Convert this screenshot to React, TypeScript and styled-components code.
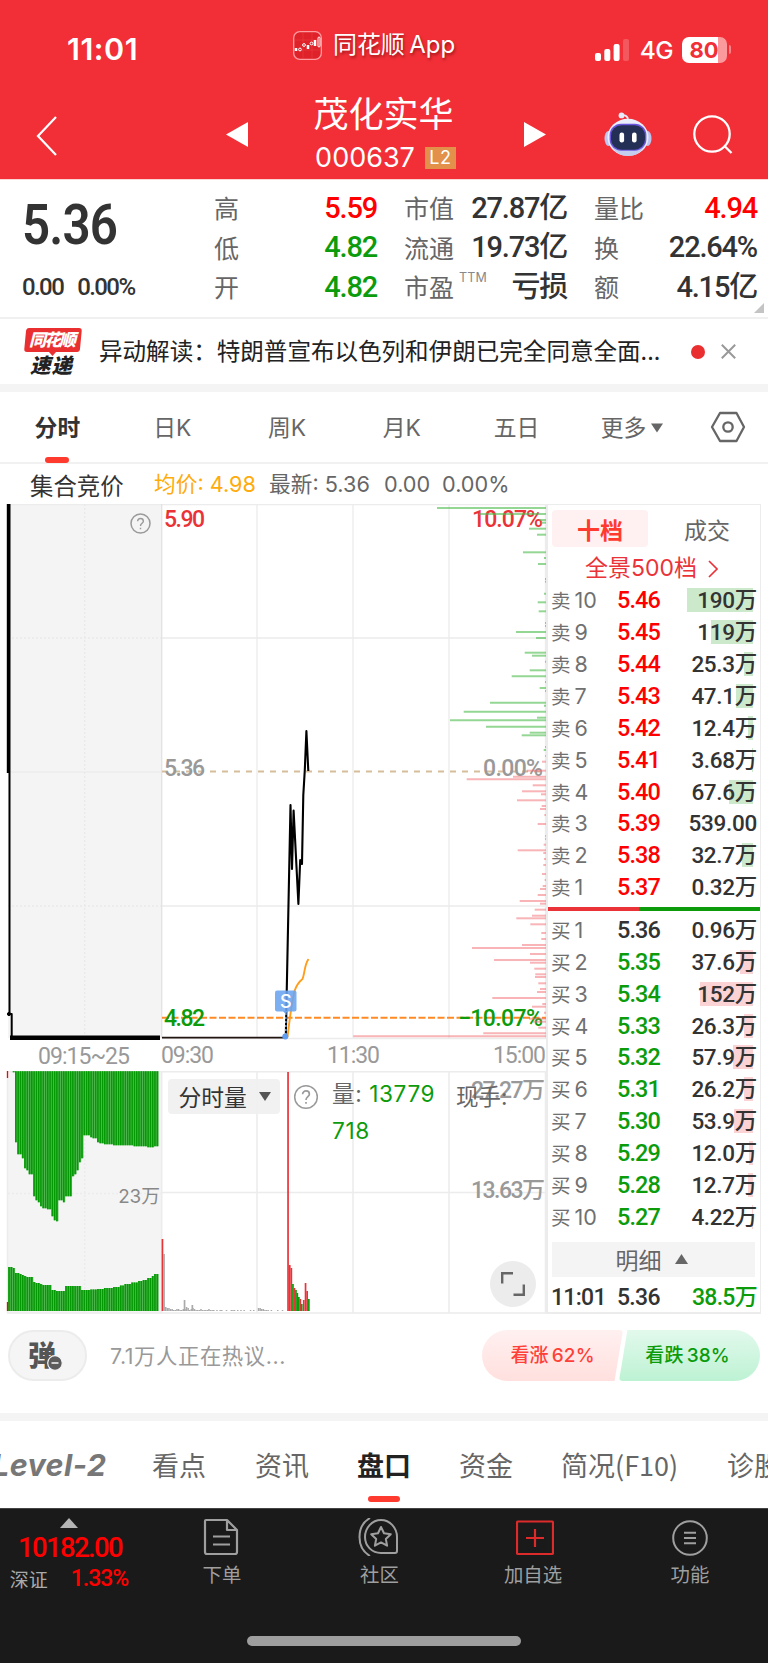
import React from 'react';
import styled, { createGlobalStyle, css } from 'styled-components';

const RED = '#f22f37';
const UP = '#ff0000';
const DOWN = '#0b9b0b';
const INK = '#333333';
const MUTED = '#666666';
const cjk = `"Noto Sans CJK SC", sans-serif`;
const sans = `Inter, ${cjk}`;
const din = `Roboto, ${cjk}`;

const Global = createGlobalStyle`
  * { box-sizing: border-box; }
  body { margin: 0; background: #fff; font-family: ${sans}; color: ${INK}; }
`;

const Page = styled.main`
  width: 768px;
  height: 1663px;
  overflow: hidden;
  display: flex;
  flex-direction: column;
  background: #fff;
  white-space: nowrap;
`;

/* ---------- header ---------- */
const Header = styled.header`
  height: 179px;
  background: ${RED};
  color: #fff;
  flex: none;
`;
const StatusBar = styled.div`
  height: 92px;
  padding: 0 37px 0 67px;
  display: grid;
  grid-template-columns: 226px 1fr auto;
  align-items: center;
`;
const Clock = styled.div`
  font: 600 30.5px/36px ${sans};
  letter-spacing: 0.5px;
  padding-top: 6px;
`;
const AppMark = styled.div`
  display: flex;
  align-items: center;
  gap: 11px;
  font: 400 24px/30px ${sans};
  letter-spacing: -0.1px;
  word-spacing: -2px;
  text-shadow: 1px 2px 3px rgba(90, 0, 0, 0.55);
  padding-bottom: 2px;
`;
const Signals = styled.div`
  display: flex;
  align-items: center;
  font: 500 24.5px/28px ${sans};
  padding-top: 7px;
`;
const Network = styled.span`
  margin: 0 9px 0 11px;
  letter-spacing: -0.6px;
`;
const Battery = styled.span`
  width: 45px;
  height: 26px;
  border-radius: 7px;
  background: linear-gradient(90deg, #fff 80%, #fa9a9d 80%);
  color: ${RED};
  font: 700 22px/26px ${sans};
  text-align: center;
  padding-right: 1px;
`;
const BatteryTip = styled.span`
  width: 2.5px;
  height: 9px;
  margin-left: 1.5px;
  border-radius: 0 3px 3px 0;
  background: #f8868a;
`;
const NavBar = styled.div`
  height: 87px;
  display: grid;
  grid-template-columns: 226px 22px 276px 22px 58px 48px 41px 38px;
  align-items: start;
`;
const NavIcon = styled.span<{ $top: number; $left?: number }>`
  display: block;
  line-height: 0;
  padding-top: ${p => p.$top}px;
  padding-left: ${p => p.$left || 0}px;
`;
const StockTitle = styled.div`
  display: flex;
  flex-direction: column;
  align-items: center;
  padding: 3px 5px 0 0;
`;
const StockName = styled.h1`
  margin: 0;
  font: 400 35px/38px ${sans};
`;
const StockCode = styled.div`
  display: flex;
  align-items: center;
  gap: 10px;
  margin: 11px 0 0 4px;
  font: 400 27px/28px ${sans};
`;
const L2Badge = styled.span`
  width: 31px;
  height: 22px;
  background: #e2904a;
  font: 400 18px/22px ${sans};
  text-align: center;
  letter-spacing: 0.5px;
`;

/* ---------- summary ---------- */
const Summary = styled.section`
  height: 140px;
  flex: none;
  display: flex;
  border-top: 1px solid #fbd5d6;
  border-bottom: 2px solid #f0f0f0;
  position: relative;
`;
const Quote = styled.div`
  flex: none;
  width: 214px;
  padding: 18px 0 0 22px;
  font-family: ${din};
`;
const LastPrice = styled.div`
  font-size: 56px;
  font-weight: 600;
  line-height: 54px;
  letter-spacing: -1px;
  transform: scaleX(0.88);
  transform-origin: left;
`;
const Change = styled.div`
  display: flex;
  gap: 14px;
  margin-top: 21px;
  font-size: 24px;
  font-weight: 500;
  line-height: 29px;
  letter-spacing: -1.6px;
`;
const StatColumn = styled.dl<{ $w: number }>`
  flex: none;
  width: ${p => p.$w}px;
  margin: 8px 27px 0 0;
`;
const Stat = styled.div`
  height: 39.6px;
  display: flex;
  justify-content: space-between;
  align-items: center;
`;
const StatLabel = styled.dt`
  font: 400 25px/39px ${cjk};
  color: ${MUTED};
  display: flex;
`;
const Superscript = styled.sup`
  font: 400 12.5px/14px ${sans};
  margin: 4px 0 0 5px;
  letter-spacing: 0.2px;
  color: #888;
`;
const StatValue = styled.dd<{ $c?: string }>`
  margin: 0;
  font: 500 29px/38px ${din};
  letter-spacing: -1.2px;
  color: ${p => p.$c || INK};
`;
const Corner = styled.svg`
  position: absolute;
  right: 4px;
  bottom: 4px;
`;

/* ---------- news ---------- */
const News = styled.section`
  height: 73px;
  flex: none;
  display: grid;
  grid-template-columns: 99px 592px 30px auto;
  align-items: center;
  border-bottom: 8px solid #f4f4f4;
`;
const NewsText = styled.p`
  margin: 0;
  font: 400 23.55px/32px ${cjk};
  color: #222;
  padding-bottom: 3px;
`;
const Dot = styled.span`
  width: 14px;
  height: 14px;
  border-radius: 50%;
  background: #ea2f31;
`;

/* ---------- period tabs ---------- */
const Periods = styled.nav`
  height: 72px;
  flex: none;
  display: grid;
  grid-template-columns: repeat(5, 114.8px) 116px 1fr;
  border-bottom: 2px solid #f1f1f1;
  align-items: center;
`;
const Period = styled.a<{ $on?: boolean }>`
  height: 70px;
  display: flex;
  align-items: center;
  justify-content: center;
  gap: 5px;
  padding-top: 2px;
  position: relative;
  font: ${p => (p.$on ? 700 : 400)} 22.8px/32px ${sans};
  color: ${p => (p.$on ? INK : MUTED)};
  ${p =>
    p.$on &&
    css`
      &::after {
        content: '';
        position: absolute;
        bottom: -1px;
        width: 24px;
        height: 6px;
        border-radius: 3px;
        background: #ff3b30;
      }
    `}
`;
const SettingsIcon = styled.svg`
  margin-left: -18px;
`;
const InfoRow = styled.div`
  height: 40px;
  flex: none;
  display: flex;
  align-items: center;
  padding-left: 30px;
  font: 400 21.7px/30px ${sans};
  color: ${MUTED};
`;
const InfoTitle = styled.span`
  font-size: 23.4px;
  color: ${INK};
  width: 124px;
  padding-top: 6px;
`;
const InfoItem = styled.span<{ $w?: number; $c?: string }>`
  width: ${p => (p.$w ? `${p.$w}px` : 'auto')};
  color: ${p => p.$c || MUTED};
`;

/* ---------- chart + order book ---------- */
const Market = styled.section`
  height: 810px;
  flex: none;
  display: flex;
`;
const Charts = styled.div`
  width: 546px;
  display: flex;
  flex-direction: column;
`;
const Svg = styled.svg`
  display: block;
  flex: none;
`;
const VolumePane = styled.div`
  position: relative;
  height: 243px;
`;
const VolumeTools = styled.div`
  position: absolute;
  left: 168px;
  top: 8px;
  display: flex;
  align-items: flex-start;
`;
const VolumeSelect = styled.button`
  width: 112px;
  height: 35px;
  border: 0;
  border-radius: 4px;
  background: rgba(240, 240, 240, 0.9);
  display: flex;
  align-items: center;
  gap: 12px;
  padding: 0 0 0 10.5px;
  font: 400 22.8px/35px ${cjk};
  color: ${INK};
`;
const HelpIcon = styled.svg`
  margin-left: 13px;
`;
const VolumeReadout = styled.div`
  margin: -4px 0 0 13px;
  width: 124px;
  font: 400 22.6px/37px ${sans};
  letter-spacing: 0.6px;
  color: ${MUTED};
  white-space: normal;
`;
const ReadoutValue = styled.span`
  color: ${DOWN};
`;
const NowHand = styled.span`
  font: 400 22.5px/32px ${sans};
  color: ${MUTED};
  margin-top: 2px;
`;
const Expand = styled.button`
  position: absolute;
  left: 490px;
  top: 190px;
  width: 46px;
  height: 46px;
  padding: 0;
  border: 0;
  border-radius: 50%;
  background: #ececec;
  display: grid;
  place-items: center;
`;
const Book = styled.aside`
  width: 215px;
  border: 2px solid #ececec;
  border-top-width: 1px;
  border-right-width: 1px;
  display: flex;
  flex-direction: column;
`;
const BookTabs = styled.div`
  display: flex;
  padding: 5px 0 0 4px;
`;
const BookTab = styled.button<{ $on?: boolean }>`
  flex: none;
  width: ${p => (p.$on ? 96 : 118)}px;
  height: 37px;
  border: 0;
  padding: 0;
  border-radius: 4px;
  background: ${p => (p.$on ? '#fff1f1' : 'none')};
  color: ${p => (p.$on ? '#ff3b30' : MUTED)};
  font: ${p => (p.$on ? 700 : 400)} 23px/36px ${cjk};
`;
const Panorama = styled.a`
  height: 37px;
  margin: 3px 0 -2.5px;
  padding-left: 37px;
  display: flex;
  align-items: center;
  gap: 11px;
  color: #ea3338;
  font: 400 23px/37px ${sans};
`;
const Levels = styled.div`
  display: flex;
  flex-direction: column;
  padding-left: 3px;
`;
const Level = styled.div`
  height: 31.87px;
  display: grid;
  grid-template-columns: 66px 55px 85px;
  align-items: center;
`;
const Side = styled.span`
  display: flex;
  align-items: center;
  gap: 4px;
  font: 400 19.5px/30px ${cjk};
  color: #707070;
`;
const Rank = styled.span`
  font: 400 21.5px/30px ${sans};
`;
const Price = styled.span<{ $c: string }>`
  font: 500 23.5px/30px ${din};
  letter-spacing: -0.9px;
  color: ${p => p.$c};
`;
const Amount = styled.span<{ $w: number; $c: string }>`
  height: 24px;
  font: 500 22.5px/25px ${din};
  letter-spacing: -0.3px;
  color: ${INK};
  text-align: right;
  background: linear-gradient(${p => p.$c}, ${p => p.$c}) no-repeat;
  background-size: ${p => p.$w}px 24px;
  background-position: ${p => 81 - p.$w}px 0;
`;
const Ratio = styled.div`
  height: 4px;
  margin: 4.1px 0 2.9px;
  flex: none;
  background: linear-gradient(90deg, #ea3338 91px, ${DOWN} 91px);
`;
const DetailBar = styled.button`
  width: 203px;
  height: 35px;
  flex: none;
  margin: 9px 0 0 4px;
  border: 0;
  padding: 0 4px 0 0;
  background: #f4f4f4;
  color: ${MUTED};
  font: 400 23px/35px ${cjk};
  display: flex;
  align-items: center;
  justify-content: center;
  gap: 13px;
`;
const Tick = styled.div`
  display: grid;
  grid-template-columns: 66px 55px 85px;
  margin: 6px 0 0 3px;
  font: 500 23px/30px ${din};
  letter-spacing: -0.7px;
`;
const TickVolume = styled.span`
  color: ${DOWN};
  text-align: right;
`;

/* ---------- discussion ---------- */
const Discuss = styled.section`
  height: 107px;
  flex: none;
  padding: 16px 8px 0;
  display: flex;
  border-bottom: 8px solid #f4f4f4;
`;
const Bullet = styled.button`
  width: 79px;
  height: 51px;
  border: 2px solid #ececec;
  border-radius: 26px;
  background: #f5f5f5;
  display: flex;
  align-items: center;
  padding: 0 0 4px 18px;
  font: 900 28px/40px ${cjk};
  color: #555;
`;
const Minus = styled.svg`
  margin: 19px 0 0 -9px;
  flex: none;
`;
const Hot = styled.span`
  width: 372px;
  margin-left: 23px;
  font: 400 21.4px/52px ${sans};
  letter-spacing: 0.55px;
  color: #999;
`;
const Votes = styled.div`
  display: flex;
`;
const Vote = styled.button<{ $up?: boolean }>`
  height: 51px;
  width: 141px;
  border: 0;
  margin-left: ${p => (p.$up ? 0 : -4)}px;
  padding: ${p => (p.$up ? 0 : '0 4px 0 0')};
  clip-path: ${p =>
    p.$up
      ? 'polygon(0 0, 100% 0, 94% 100%, 0 100%)'
      : 'polygon(6% 0, 100% 0, 100% 100%, 0 100%)'};
  border-radius: ${p => (p.$up ? '26px 4px 4px 26px' : '4px 26px 26px 4px')};
  background: ${p =>
    p.$up ? 'linear-gradient(#fff0f0, #ffe0de)' : 'linear-gradient(#e2f9ec, #bdf2d3)'};
  color: ${p => (p.$up ? '#ff4038' : DOWN)};
  font: 500 19px/52px ${sans};
  word-spacing: -2px;
  letter-spacing: 0.1px;
`;

/* ---------- section tabs ---------- */
const Sections = styled.nav`
  height: 87px;
  flex: none;
  display: flex;
  align-items: center;
`;
const Section = styled.a<{ $w: number; $on?: boolean }>`
  flex: none;
  width: ${p => p.$w}px;
  height: 87px;
  position: relative;
  font: ${p => (p.$on ? 700 : 400)} 27px/87px ${cjk};
  color: ${p => (p.$on ? '#222' : MUTED)};
  ${p =>
    p.$on &&
    css`
      &::after {
        content: '';
        position: absolute;
        left: 11px;
        bottom: 6px;
        width: 32px;
        height: 6px;
        border-radius: 3px;
        background: #ff3b30;
      }
    `}
`;
const LevelTwo = styled.a`
  flex: none;
  width: 160px;
  margin-left: -8px;
  font: italic 700 30.5px/87px ${sans};
  letter-spacing: 0.4px;
  color: #777;
`;

/* ---------- bottom bar ---------- */
const Bottom = styled.footer`
  flex: 1;
  background: #1a1a1a;
  color: #9f9f9f;
  display: flex;
  flex-direction: column;
  align-items: center;
  border-top: 1px solid #444;
`;
const Dock = styled.div`
  width: 100%;
  height: 127px;
  display: grid;
  grid-template-columns: 138px 168px 147px 160px 154px;
`;
const IndexBox = styled.div`
  display: flex;
  flex-direction: column;
  align-items: center;
  padding-top: 9px;
  color: ${UP};
`;
const IndexValue = styled.div`
  font: 500 27.5px/30px ${din};
  letter-spacing: -1.6px;
  margin: 5px 0 0 2px;
`;
const IndexChange = styled.div`
  display: flex;
  align-items: center;
  gap: 23px;
  margin-top: 2px;
  font: 500 23px/28px ${din};
  letter-spacing: -1px;
`;
const IndexName = styled.span`
  font: 400 19px/28px ${cjk};
  letter-spacing: 0;
  color: #aaa;
`;
const DockItem = styled.a`
  display: flex;
  flex-direction: column;
  align-items: center;
  padding-top: 9px;
  font: 400 19.4px/28px ${cjk};
`;
const DockIcon = styled.svg<{ $shift: number }>`
  flex: none;
  margin-left: ${p => p.$shift}px;
`;
const DockLabel = styled.span`
  margin-top: 4px;
`;
const HomeBar = styled.div`
  width: 274px;
  height: 10px;
  border-radius: 5px;
  background: #9e9e9e;
`;

/* ---------- data ---------- */
type Row = [number, string, string, number];
const sells: Row[] = [
  [10, '5.46', '190万', 66], [9, '5.45', '119万', 42], [8, '5.44', '25.3万', 9],
  [7, '5.43', '47.1万', 17], [6, '5.42', '12.4万', 5], [5, '5.41', '3.68万', 1],
  [4, '5.40', '67.6万', 24], [3, '5.39', '539.00', 0], [2, '5.38', '32.7万', 11],
  [1, '5.37', '0.32万', 0],
];
const buys: Row[] = [
  [1, '5.36', '0.96万', 0], [2, '5.35', '37.6万', 13], [3, '5.34', '152万', 53],
  [4, '5.33', '26.3万', 9], [5, '5.32', '57.9万', 20], [6, '5.31', '26.2万', 9],
  [7, '5.30', '53.9万', 19], [8, '5.29', '12.0万', 4], [9, '5.28', '12.7万', 5],
  [10, '5.27', '4.22万', 1],
];

// Resting orders by price: [y, left end of the line]
const asks: [number, number][] = [
  [4, 437], [10, 479], [16, 539], [18.7, 541], [24.7, 529], [30.7, 537], [48.3, 523], [54, 544],
  [60, 538], [75, 545], [77.7, 545], [89.7, 544], [98.3, 537.7], [107.3, 538.7], [119, 545],
  [122, 545], [128, 516], [134, 536], [148.7, 524.7], [151.7, 532], [157.7, 545], [166.3, 529.7],
  [172.3, 511.7], [178, 545], [184, 539.7], [187, 545], [198.7, 490], [201.7, 544], [207.7, 463.7],
  [213.7, 537], [216.3, 450], [222.7, 486], [228.7, 529.7], [231.3, 521.7], [243, 545], [246, 543.7],
];
const bids: [number, number][] = [
  [252, 545], [257.7, 542], [266.7, 526.7], [272.7, 513], [275.3, 466.7], [281.3, 532.7],
  [287.3, 522], [290.3, 541], [296.3, 517], [302, 541.7], [305, 540], [311, 544.4], [320, 537.7],
  [332, 545], [335, 545], [340.7, 543.7], [346.3, 517.7], [349, 543.3], [355, 544], [361, 543.3],
  [370, 542], [376, 544.7], [382, 542.7], [385, 540], [391, 537.7], [397, 519.7], [399.7, 540],
  [405.7, 534.7], [411.7, 532], [414.3, 516.3], [420.3, 530.3], [429, 541.3], [435, 541.3],
  [441, 522], [444, 472], [450, 530], [456, 494], [458.7, 530], [464.7, 534.3], [470.3, 535.3],
  [473, 535], [479.3, 538.3], [485, 540], [488, 537], [494, 492.3], [500, 542.3], [502.7, 532],
  [508.7, 544], [514.7, 529], [517.7, 533], [523.7, 538.3], [529.3, 483.3], [532.3, 353.3],
];

// Step profiles of the auction volumes: [from x, height]
const upper: [number, number][] = [
  [11, 1], [13, 34], [15, 71], [17.3, 83], [19.6, 87], [22, 92], [24, 97], [26.3, 99], [28.6, 103],
  [31, 125], [33.3, 129], [35.6, 131], [38, 133], [40, 135], [42.3, 137], [46, 138], [51, 145],
  [53.5, 149], [56, 150], [58, 129], [62, 131], [65, 125], [71.5, 105], [74, 103], [76.3, 99],
  [78.6, 91], [81, 87], [83, 64], [89, 66], [92, 67], [95, 71], [98, 72], [103, 73], [113, 74],
  [133, 75], [146, 76], [152, 75], [156.5, 69],
];
const lower: [number, number][] = [
  [8, 44], [11, 43], [13, 41], [15, 38], [18, 37], [20, 36], [22, 35], [25, 34], [31, 29], [35, 28],
  [38, 27], [41, 26], [51, 21], [56, 20], [65, 25], [81, 21], [90, 21.5], [96, 22], [103, 23],
  [111, 24], [118, 25.5], [124, 27], [130, 28.5], [136, 30], [141, 31], [146, 33], [150, 35],
  [154, 37], [156.5, 42],
];
const heightAt = (steps: [number, number][], x: number) =>
  steps.reduce((h, [from, v]) => (x >= from ? v : h), 0);
const slots = Array.from({ length: 66 }, (_, i) => 8.2 + i * 2.28);

// Intraday volume: [x, height, colour]
const volumes: [number, number, string][] = [
  [162.4, 72, '#ea3338'], [164, 57, '#aaa'], [184.5, 11, '#aaa'], [192.3, 6, '#aaa'],
  [288, 239, '#ea3338'], [289.7, 46, '#ea3338'], [291.3, 43, '#ea3338'], [292.9, 27, DOWN],
  [294.4, 23, '#ea3338'], [295.9, 21, DOWN], [297.3, 18, DOWN], [298.8, 14, DOWN],
  [300.3, 12, '#ea3338'], [301.7, 7, DOWN], [303.7, 11, '#ea3338'], [305.5, 28, '#ea3338'],
  [307.1, 20, '#ea3338'], [308.8, 12, DOWN],
];
const quiet = [4, 3, 3, 2, 2, 1, 1, 2, 2, 1, 1, 2, 2, 4, 3, 1, 2, 3, 2, 1, 1, 1, 2, 1, 1, 1, 1, 2, 1, 1, 1,
  0, 1, 0, 1, 1, 0, 0, 1, 0, 0, 1, 1, 1, 0, 1, 0, 1, 0, 1, 0, 0, 0, 1, 0, 1, 0, 0, 3, 3, 2, 2, 1, 1, 1, 0, 1, 0,
  0, 0, 1, 0, 0, 1];

const Label = styled.text<{ $w?: number }>`
  font: ${p => p.$w || 500} 23px ${din};
`;

const Help = ({ cx, cy, r }: { cx: number; cy: number; r: number }) => (
  <g fill="none" stroke="#9a9a9a" strokeWidth={1.5}>
    <circle cx={cx} cy={cy} r={r} />
    <path
      transform={`translate(${cx} ${cy}) scale(${r / 10})`}
      d="M-3-2.4C-3-6.4 3-6.2 3-2.5C3-.3 0-.2 0 2.6M0 4.4v1.6"
    />
  </g>
);

const PriceChart = () => (
  <Svg width={546} height={567} viewBox="0 0 546 567">
    <rect x={8} width={153.5} height={534} fill="#f4f4f4" />
    <g stroke="#ececec" strokeWidth={1.3}>
      <path d="M8 .6H546M162 134H546M162 402H546M162 534.5H546M257 0V534M353 0V534M545.5 0V534M449 0V534M8 268H162" />
      <path d="M161.7 0V534" stroke="#e2e2e2" />
      <path d="M84.7 0V534M8 134H161M8 402H161" strokeDasharray="2 2" stroke="#e9e9e9" />
    </g>
    <path d="M162 267.5H546" stroke="#d6bd9c" strokeWidth={1.8} strokeDasharray="6 6" />
    <path d="M162 513.7H546" stroke="#ff8a24" strokeWidth={2} strokeDasharray="7 2.5" />
    <Label x={164} y={23} fill="#ea3338" textLength={41}>5.90</Label>
    <Label x={472} y={23} fill="#ea3338" textLength={71}>10.07%</Label>
    <Label x={164} y={272} fill="#999" textLength={41}>5.36</Label>
    <Label x={483} y={272} fill="#999" textLength={60}>0.00%</Label>
    <Label x={164} y={521.5} fill={DOWN} textLength={41}>4.82</Label>
    <Label x={458} y={521.5} fill={DOWN} textLength={85}>−10.07%</Label>
    <g stroke="#4dbb4d" strokeOpacity={0.6} strokeWidth={2}>
      {asks.map(([y, x]) => <path key={y} d={`M${x} ${y}H546`} />)}
    </g>
    <g stroke="#f26a6e" strokeOpacity={0.5} strokeWidth={2}>
      {bids.map(([y, x]) => <path key={y} d={`M${x} ${y}H546`} />)}
    </g>
    <g fill="none" stroke="#000" strokeLinejoin="round">
      <path d="M8.3 0V269" strokeWidth={3} />
      <path d="M9.5 0V510H11.7V533" strokeWidth={2} />
      <path d="M10 533.7H160" strokeWidth={4.4} />
      <circle cx={9} cy={510} r={1.6} fill="#000" />
      <path d="M162 533.7H285" stroke="#201510" strokeWidth={1.8} />
      <path
        d="M285.8 533L290.5 301L292 365L293.6 306.5L298.4 400L300.2 356L302 360L303.3 291L304.8 266L306.4 227L308.3 267"
        strokeWidth={2.1}
      />
      <path
        d="M287.5 533C290 512 292 497 294.5 487C297 480 300 477 302.5 475C305 469 304 462 308.5 455"
        stroke="#ff9d1c"
        strokeWidth={1.9}
      />
    </g>
    <path d="M285.8 509V530" stroke="#6aa4f0" strokeWidth={1.5} strokeDasharray="2 2" />
    <circle cx={285.3} cy={532.5} r={3} fill="#5f9df0" />
    <rect x={275} y={486.5} width={21.5} height={21} rx={2} fill="#6aa4f0" fillOpacity={0.88} />
    <path d="M283 507h5l-2.5 3z" fill="#6aa4f0" />
    <text x={285.7} y={504} fill="#fff" textAnchor="middle" fontFamily="Inter" fontSize={18} fontWeight={500}>S</text>
    <Help cx={140.5} cy={19.5} r={9.5} />
    <g fill="#999">
      <Label $w={400} x={38} y={560} textLength={92}>09:15~25</Label>
      <Label $w={400} x={161} y={559} textLength={53}>09:30</Label>
      <Label $w={400} x={327} y={559} textLength={53}>11:30</Label>
      <Label $w={400} x={493} y={559} textLength={53}>15:00</Label>
    </g>
  </Svg>
);

const VolumeChart = () => (
  <Svg width={546} height={243} viewBox="0 0 546 243">
    <rect x={8} width={153.5} height={242} fill="#f4f4f4" />
    <g stroke="#ececec" strokeWidth={1.5}>
      <path d="M8 .8H546M162 121.5H546M7 242H546M257 0V242M353 0V242M449 0V242M545.5 0V242M7.5 0V242M161.7 0V242" />
      <path d="M84.7 0V242M8 122.5H161" strokeDasharray="2 2" />
    </g>
    {slots.map(x => {
      const top = x > 11 ? heightAt(upper, x) : 0;
      const bottom = heightAt(lower, x);
      return (
        <g key={x}>
          <path d={`M${x} .3h2.3v${top}h-2.3zM${x} 239.9h2.3v${-bottom}h-2.3z`} fill="#55b955" />
          <path d={`M${x} .3h1.6v${top}h-1.6zM${x} 239.9h1.6v${-bottom}h-1.6z`} fill="#069906" />
        </g>
      );
    })}
    <path d="M7.5 0V7M7.5 231V240" stroke="#f00" strokeWidth={1.3} />
    <g fill="#aaa">
      {quiet.map((h, i) => <rect key={i} x={165 + i * 1.6} y={240 - h} width={1.5} height={h} />)}
    </g>
    {volumes.map(([x, h, c]) => (
      <rect key={x} x={x - 0.8} y={240 - h} width={1.7} height={h} fill={c} />
    ))}
    <text x={160} y={131.5} textAnchor="end" fontFamily='Inter, "Noto Sans CJK SC"' fontSize={18.8} fill="#888">23万</text>
    <g fill="#999">
      <Label x={471} y={27} textLength={74}>27.27万</Label>
      <Label x={471} y={126.5} textLength={74}>13.63万</Label>
    </g>
  </Svg>
);

const BookSide = ({ rows, name, tint }: { rows: Row[]; name: string; tint: string }) => (
  <Levels>
    {rows.map(([n, price, amount, w]) => (
      <Level key={n}>
        <Side>{name}<Rank>{n}</Rank></Side>
        <Price $c={name === '卖' ? UP : n === 1 ? INK : DOWN}>{price}</Price>
        <Amount $w={w} $c={tint}>{amount}</Amount>
      </Level>
    ))}
  </Levels>
);

const stats: { w: number; items: [string, string, string?][] }[] = [
  { w: 163, items: [['高', '5.59', UP], ['低', '4.82', DOWN], ['开', '4.82', DOWN]] },
  { w: 163, items: [['市值', '27.87亿'], ['流通', '19.73亿'], ['市盈', '亏损']] },
  { w: 163, items: [['量比', '4.94', UP], ['换', '22.64%'], ['额', '4.15亿']] },
];

const Robot = () => (
  <svg width={48} height={45} viewBox="0 0 48 45">
    <path d="M17.5 3.2C22 3 24 4.500 24 8" stroke="#e5e9fa" strokeWidth={1.8} fill="none" />
    <circle cx={17.5} cy={3.4} r={2.9} fill="#e5e9fa" />
    <ellipse cx={4.5} cy={26.5} rx={4} ry={7.5} fill="#bcc6ee" />
    <ellipse cx={43.5} cy={26.5} rx={4} ry={7.5} fill="#bcc6ee" />
    <ellipse cx={24} cy={25.3} rx={20.5} ry={18.5} fill="#e9edfc" />
    <path d="M7 34Q24 43 41 34Q35 44 24 44T7 34" fill="#c5cdee" />
    <rect x={5.6} y={11.7} width={36.8} height={27} rx={11.5} fill="#6b55dc" />
    <rect x={7} y={13.2} width={34} height={24.5} rx={10.5} fill="#242f55" />
    <g fill="#fff">
      <rect x={15.5} y={20.5} width={4.6} height={10} rx={2.2} />
      <rect x={28} y={20.5} width={4.6} height={10} rx={2.2} />
    </g>
  </svg>
);

export default function App() {
  return (
    <>
      <Global />
      <Page>
        <Header>
          <StatusBar>
            <Clock>11:01</Clock>
            <AppMark>
              <svg width={29} height={29} viewBox="0 0 29 29">
                <rect x={0.7} y={0.7} width={27.6} height={27.6} rx={6} fill="#df2129" stroke="#ff9ca0" strokeWidth={1.3} />
                <path d="M1 9H28M1 19H28M10 1V28M19 1V28" stroke="#e9454b" strokeWidth={0.5} />
                <g fill="none" stroke="#fff">
                  <path d="M3 17v3M15 14v4M22 9v6" strokeWidth={2.5} />
                  <circle cx={7} cy={18.5} r={1.4} />
                  <circle cx={11} cy={14} r={1.4} />
                  <circle cx={18.5} cy={12.5} r={1.4} />
                  <rect x={25} y={6} width={2} height={10} rx={1} />
                </g>
              </svg>
              同花顺 App
            </AppMark>
            <Signals>
              <svg width={34} height={22} viewBox="0 0 34 22" fill="#fff">
                <rect y={14} width={6} height={8} rx={2} />
                <rect x={9.3} y={10} width={6} height={12} rx={2} />
                <rect x={18.6} y={5} width={6} height={17} rx={2} />
                <rect x={28} width={6} height={22} rx={2} fillOpacity={0.2} />
              </svg>
              <Network>4G</Network>
              <Battery>80</Battery>
              <BatteryTip />
            </Signals>
          </StatusBar>
          <NavBar>
            <NavIcon $top={24} $left={36}>
              <svg width={21} height={40} viewBox="0 0 21 40"><path d="M20 1L2 20L20 39" fill="none" stroke="#fff" strokeWidth={2.2} /></svg>
            </NavIcon>
            <NavIcon $top={30}>
              <svg width={22} height={25}><path d="M0 12.5L22 0V25z" fill="#fff" /></svg>
            </NavIcon>
            <StockTitle>
              <StockName>茂化实华</StockName>
              <StockCode>000637<L2Badge>L2</L2Badge></StockCode>
            </StockTitle>
            <NavIcon $top={30}>
              <svg width={22} height={25}><path d="M22 12.5L0 0V25z" fill="#fff" /></svg>
            </NavIcon>
            <span />
            <NavIcon $top={20}><Robot /></NavIcon>
            <span />
            <NavIcon $top={23}>
              <svg width={40} height={40} viewBox="0 0 40 40" fill="none" stroke="#fff" strokeWidth={2.3}>
                <circle cx={19} cy={19} r={17.7} />
                <path d="M31 30.5L38.5 38" />
              </svg>
            </NavIcon>
          </NavBar>
        </Header>

        <Summary>
          <Quote>
            <LastPrice>5.36</LastPrice>
            <Change><span>0.00</span><span>0.00%</span></Change>
          </Quote>
          {stats.map(col => (
            <StatColumn key={col.items[0][0]} $w={col.w}>
              {col.items.map(([label, value, color]) => (
                <Stat key={label}>
                  <StatLabel>{label}{label === '市盈' && <Superscript>TTM</Superscript>}</StatLabel>
                  <StatValue $c={color}>{value}</StatValue>
                </Stat>
              ))}
            </StatColumn>
          ))}
          <Corner width={10} height={10}><path d="M10 0V10H0z" fill="#c4c4c4" /></Corner>
        </Summary>

        <News>
          <svg width={84} height={50} viewBox="0 0 84 50">
            <path d="M29 1H79Q82 1 81.700 4L80 22Q79.700 25 77 25H56L52.500 29L49 25H27Q24 25 24.300 22L26 4Q26.500 1 29 1z" fill="#ea2f31" />
            <g fontFamily="Noto Sans CJK SC" fontWeight={900} fontStyle="italic">
              <text x={29} y={19} fontSize={17} fill="#fff" textLength={47}>同花顺</text>
              <text x={30} y={46} fontSize={20.5} fill="#222" textLength={42}>速递</text>
            </g>
          </svg>
          <NewsText>异动解读：特朗普宣布以色列和伊朗已完全同意全面...</NewsText>
          <Dot />
          <svg width={15} height={15}><path d="M.8 .8L14.2 14.2M14.2 .8L.8 14.2" stroke="#999" strokeWidth={2} /></svg>
        </News>

        <Periods>
          <Period $on>分时</Period>
          <Period>日K</Period>
          <Period>周K</Period>
          <Period>月K</Period>
          <Period>五日</Period>
          <Period>更多<svg width={12} height={10}><path d="M0 .5H12L6 9.5z" fill={MUTED} /></svg></Period>
          <SettingsIcon width={84} height={32} viewBox="0 0 84 32" fill="none" stroke={MUTED} strokeWidth={2.3}>
            <path d="M48 2H64.500L72 16L64.500 30H48L40 16z" strokeLinejoin="round" />
            <circle cx={56} cy={16} r={4.7} />
          </SettingsIcon>
        </Periods>
        <InfoRow>
          <InfoTitle>集合竞价</InfoTitle>
          <InfoItem $w={115} $c="#ffab0a">均价: 4.98</InfoItem>
          <InfoItem $w={115}>最新: 5.36</InfoItem>
          <InfoItem $w={58}>0.00</InfoItem>
          <InfoItem>0.00%</InfoItem>
        </InfoRow>

        <Market>
          <Charts>
            <PriceChart />
            <VolumePane>
              <VolumeChart />
              <VolumeTools>
                <VolumeSelect>分时量<svg width={12} height={9}><path d="M0 0H12L6 9z" fill="#555" /></svg></VolumeSelect>
                <HelpIcon width={26} height={36}><Help cx={13} cy={18} r={11.3} /></HelpIcon>
                <VolumeReadout>量: <ReadoutValue>13779 718</ReadoutValue></VolumeReadout>
                <NowHand>现手:</NowHand>
              </VolumeTools>
              <Expand>
                <svg width={24} height={24} fill="none" stroke="#666" strokeWidth={2.4}>
                  <path d="M1.2 11.5V1.2H12M22.8 12.5V22.8H12.5" />
                </svg>
              </Expand>
            </VolumePane>
          </Charts>
          <Book>
            <BookTabs><BookTab $on>十档</BookTab><BookTab>成交</BookTab></BookTabs>
            <Panorama>
              全景500档
              <svg width={10} height={18}><path d="M1 1L9 9L1 17" fill="none" stroke="#ea3338" strokeWidth={1.7} /></svg>
            </Panorama>
            <BookSide rows={sells} name="卖" tint="#cce9cc" />
            <Ratio />
            <BookSide rows={buys} name="买" tint="#fbd3d5" />
            <DetailBar>明细<svg width={13} height={10}><path d="M0 10H13L6.5 0z" fill={MUTED} /></svg></DetailBar>
            <Tick><span>11:01</span><span>5.36</span><TickVolume>38.5万</TickVolume></Tick>
          </Book>
        </Market>

        <Discuss>
          <Bullet>
            弹
            <Minus width={16} height={16} viewBox="0 0 16 16">
              <circle cx={8} cy={8} r={7.3} fill="#5c5c5c" stroke="#f5f5f5" strokeWidth={1.2} />
              <path d="M4.5 8H11.5" stroke="#eee" strokeWidth={1.6} />
            </Minus>
          </Bullet>
          <Hot>7.1万人正在热议...</Hot>
          <Votes>
            <Vote $up>看涨 62%</Vote>
            <Vote>看跌 38%</Vote>
          </Votes>
        </Discuss>

        <Sections>
          <LevelTwo>Level-2</LevelTwo>
          <Section $w={103}>看点</Section>
          <Section $w={102}>资讯</Section>
          <Section $w={102} $on>盘口</Section>
          <Section $w={102}>资金</Section>
          <Section $w={166}>简况(F10)</Section>
          <Section $w={60}>诊股</Section>
        </Sections>

        <Bottom>
          <Dock>
            <IndexBox>
              <svg width={18} height={10}><path d="M9 0L18 10H0z" fill="#b4b4b4" /></svg>
              <IndexValue>10182.00</IndexValue>
              <IndexChange><IndexName>深证</IndexName>1.33%</IndexChange>
            </IndexBox>
            <DockItem>
              <DockIcon $shift={-3} width={36} height={38} viewBox="0 0 36 38" fill="none" stroke="#9f9f9f" strokeWidth={2.2}>
                <path d="M3 2H24L34 12V34Q34 36 32 36H4Q2 36 2 34V3Q2 2 3 2zM24 2V12H34M10 18.5H27M10 26.5H27" strokeLinejoin="round" />
              </DockIcon>
              <DockLabel>下单</DockLabel>
            </DockItem>
            <DockItem>
              <DockIcon $shift={-3} width={42} height={38} viewBox="0 0 42 38" fill="none" stroke="#9f9f9f" strokeWidth={2}>
                <path d="M13 0C-1 8-1 30 13 38" />
                <path d="M24 2C15 2 8 10 8 19S15 35 24 35H38Q40 35 40 33V19C40 10 33 2 24 2z" />
                <path d="M24 9l3 6.300 6.800 .9-5 4.700 1.300 6.800-6.100-3.300-6.100 3.300 1.300-6.800-5-4.700 6.800-.9z" strokeLinejoin="round" />
              </DockIcon>
              <DockLabel>社区</DockLabel>
            </DockItem>
            <DockItem>
              <DockIcon $shift={4} width={38} height={38} viewBox="0 0 38 38" fill="none" stroke="#dd2a2a" strokeWidth={2.2}>
                <rect x={1} y={3.5} width={36} height={32.5} rx={1} />
                <path d="M10 20H28M19 11V29" />
              </DockIcon>
              <DockLabel>加自选</DockLabel>
            </DockItem>
            <DockItem>
              <DockIcon $shift={-1} width={38} height={38} viewBox="0 0 38 38" fill="none" stroke="#9f9f9f" strokeWidth={2}>
                <circle cx={19} cy={20} r={16.8} />
                <path d="M13 14.8H25M13 20H25M13 25.2H25" />
              </DockIcon>
              <DockLabel>功能</DockLabel>
            </DockItem>
          </Dock>
          <HomeBar />
        </Bottom>
      </Page>
    </>
  );
}
